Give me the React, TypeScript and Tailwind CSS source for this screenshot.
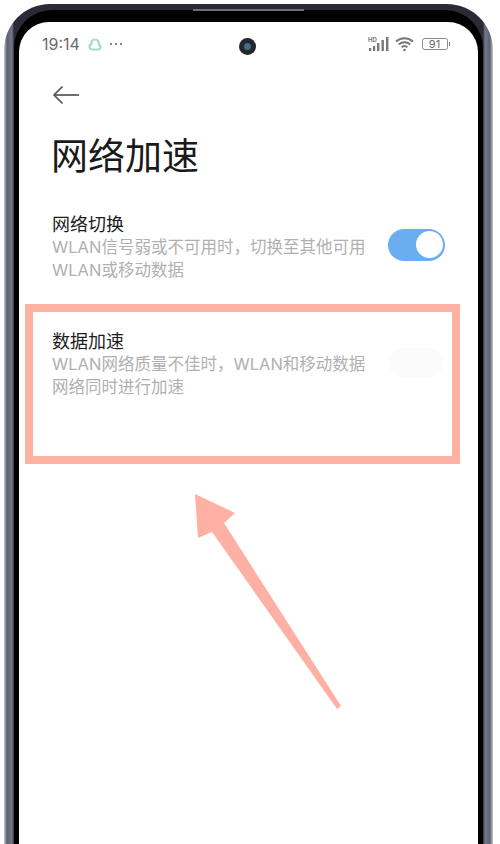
const FONT = "font-['Inter','Noto_Sans_CJK_SC',sans-serif]";

function StatusBar() {
  return (
    <div className="relative flex h-[26px] items-center justify-between pl-[23px] pr-[28px]">
      <div className="flex items-center">
        <span className="text-[16px] leading-none text-[#6b6b6b]">19:14</span>
        <svg width="16" height="15" viewBox="0 0 16 15" className="ml-[7px]" fill="none" stroke="#a5dcc8" strokeWidth="2.2">
          <path d="M5 12.5h6a2.6 2.6 0 0 0 .8-5A3.8 3.8 0 0 0 8 2.5a3.6 3.6 0 0 0-3.6 4.6A2.8 2.8 0 0 0 5 12.5z" />
        </svg>
        <div className="ml-[7px] flex gap-[2.5px]">
          <span className="h-[2.5px] w-[2.5px] rounded-full bg-[#666]" />
          <span className="h-[2.5px] w-[2.5px] rounded-full bg-[#666]" />
          <span className="h-[2.5px] w-[2.5px] rounded-full bg-[#666]" />
        </div>
      </div>
      <div className="absolute left-[220px] top-[7px] flex h-[17px] w-[17px] items-center justify-center rounded-full bg-[#23282e]">
        <span className="h-[7px] w-[7px] rounded-full bg-[#3f6f86]" />
      </div>
      <div className="flex items-center">
        <svg width="22" height="16" viewBox="0 0 22 16" fill="#777">
          <rect x="1" y="12" width="2.2" height="3" />
          <rect x="5" y="10" width="2.2" height="5" />
          <rect x="9" y="7" width="2.4" height="8" />
          <rect x="13.5" y="4" width="2.4" height="11" />
          <rect x="18" y="1" width="2.4" height="14" />
          <text x="0" y="6" fontSize="6" fontWeight="700" fontFamily="Inter, sans-serif">HD</text>
        </svg>
        <svg width="20" height="16" viewBox="0 0 20 16" fill="none" stroke="#777" strokeWidth="2" className="ml-[5px]">
          <path d="M1 5.5a12.5 12.5 0 0 1 17 0" />
          <path d="M3.8 8.5a8.4 8.4 0 0 1 11.4 0" />
          <path d="M6.6 11.3a4.4 4.4 0 0 1 5.8 0" />
          <circle cx="9.5" cy="14" r="1.3" fill="#777" stroke="none" />
        </svg>
        <div className="ml-[7px] flex items-center">
          <div className="flex h-[12px] w-[26px] items-center justify-center rounded-[2.5px] border border-[#888] text-[11px] leading-none text-[#666]">
            91
          </div>
          <span className="ml-[1px] h-[4px] w-[1.5px] bg-[#777]" />
        </div>
      </div>
    </div>
  );
}

function Toggle({ on }: { on: boolean }) {
  if (on) {
    return (
      <div className="mb-[7px] flex h-[32px] w-[57px] shrink-0 items-center justify-end rounded-full bg-[#6aaef0] pr-[2px]">
        <span className="h-[27px] w-[27px] rounded-full bg-white" />
      </div>
    );
  }
  return <div className="mb-[4px] mr-[2px] h-[30px] w-[54px] shrink-0 rounded-full bg-[#fbfbfb]" />;
}

function SettingRow({ title, desc, on }: { title: string; desc: string[]; on: boolean }) {
  return (
    <div className="flex items-center justify-between">
      <div className="w-[330px]">
        <div className="text-[18px] leading-[22px] text-[#1c1c1c]">{title}</div>
        {desc.map((line) => (
          <div key={line} className="whitespace-nowrap text-[16.5px] leading-[23px] text-[#b0b0b0]">
            {line}
          </div>
        ))}
      </div>
      <Toggle on={on} />
    </div>
  );
}

export default function App() {
  return (
    <div className={`relative h-[844px] w-[500px] overflow-hidden bg-white ${FONT}`}>
      {/* phone body */}
      <div className="ml-[4px] mt-[4px] h-[860px] w-[489px] rounded-t-[46px] bg-[linear-gradient(90deg,#c8cad2_0px,#5f6172_3px,#74768a_8px,#2a2b35_10px,#2a2b35_calc(100%-10px),#74768a_calc(100%-8px),#5f6172_calc(100%-3px),#c8cad2_100%)] px-[10px] pt-[6px]">
        <div className="h-full rounded-t-[38px] bg-black px-[5px] pt-[12px]">
          <div className="h-full rounded-t-[30px] bg-white pt-[9px]">
            <StatusBar />
            <div className="ml-[33px] mt-[28px]">
              <svg width="28" height="20" viewBox="0 0 28 20" fill="none" stroke="#555" strokeWidth="1.7">
                <path d="M27 10H2" />
                <path d="M10.5 1.5 2 10l8.5 8.5" />
              </svg>
            </div>
            <h1 className="ml-[32px] mt-[30px] text-[37px] font-normal leading-[44px] text-[#1a1a1a]">网络加速</h1>
            <div className="ml-[33px] mr-[33px] mt-[35px] flex flex-col gap-[49px]">
              <SettingRow
                title="网络切换"
                desc={["WLAN信号弱或不可用时，切换至其他可用", "WLAN或移动数据"]}
                on
              />
              <SettingRow
                title="数据加速"
                desc={["WLAN网络质量不佳时，WLAN和移动数据", "网络同时进行加速"]}
                on={false}
              />
            </div>
          </div>
        </div>
      </div>

      {/* speaker slit */}
      <div className="absolute left-[193px] top-[9px] h-[2px] w-[111px] bg-[#6d6f7c]" />

      {/* annotation overlays */}
      <div className="absolute left-[25px] top-[304px] h-[160px] w-[435px] border-[8px] border-[#fdb3a4]" />
      <svg className="absolute left-0 top-0" width="500" height="844" fill="#fdb0a3">
        <polygon points="195,494 235,513 224,523 341,706 337,709 212,532 198,538" />
      </svg>
    </div>
  );
}
